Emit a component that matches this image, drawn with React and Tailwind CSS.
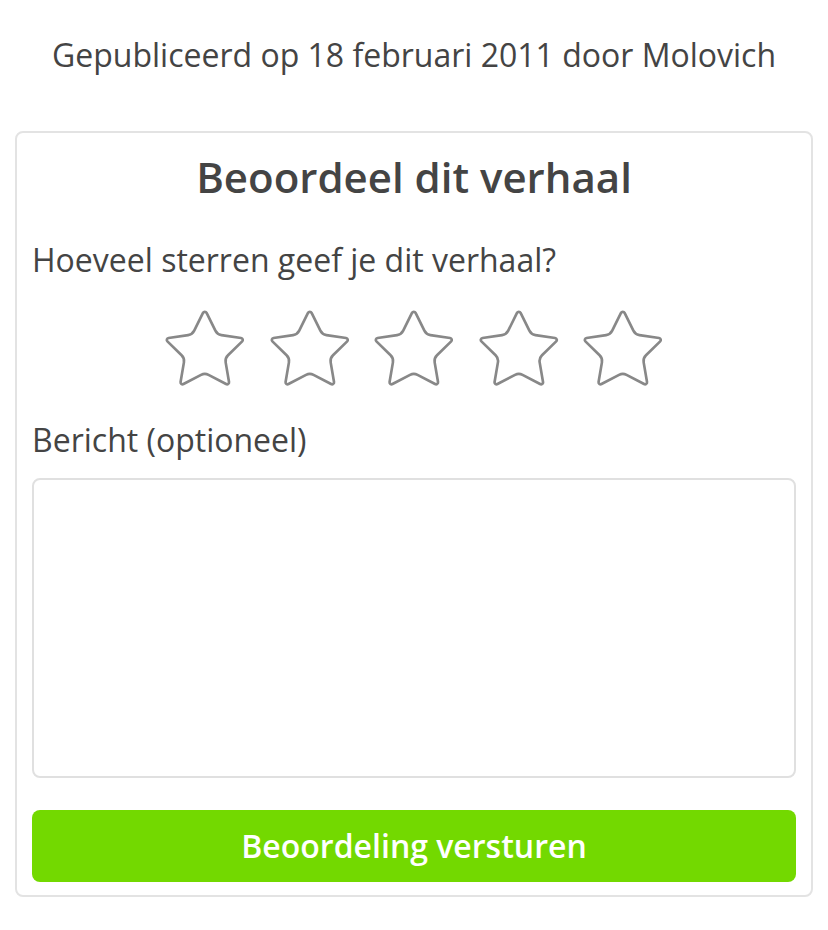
import React, { useState } from 'react';

const Star = () => (
    <svg
        width="83.6"
        height="79.8"
        viewBox="1 1 22 21"
        fill="none"
        stroke="#888888"
        strokeWidth="0.7"
        strokeLinejoin="round"
        strokeLinecap="round"
    >
        <path d="M11.525 2.295a.53.53 0 0 1 .95 0l2.31 4.679a2.123 2.123 0 0 0 1.595 1.16l5.166.756a.53.53 0 0 1 .294.904l-3.736 3.638a2.123 2.123 0 0 0-.611 1.878l.882 5.14a.53.53 0 0 1-.771.56l-4.618-2.428a2.122 2.122 0 0 0-1.973 0L6.396 21.01a.53.53 0 0 1-.77-.56l.881-5.139a2.122 2.122 0 0 0-.611-1.879L2.16 9.795a.53.53 0 0 1 .294-.906l5.165-.755a2.122 2.122 0 0 0 1.597-1.16z" />
    </svg>
);

export default function App() {
    const [message, setMessage] = useState('');

    return (
        <div className="min-h-[930px] bg-white text-[#444] font-['Open_Sans',sans-serif]">
            <div className="pt-[35px] text-center text-[32px] leading-[40px]">
                Gepubliceerd op 18 februari 2011 door Molovich
            </div>

            <div className="mx-[15px] mt-[56px] border-2 border-[#e3e3e3] rounded-[8px] px-[15px] pt-[19px] pb-[13px]">
                <h2 className="text-center text-[42px] leading-[50px] font-semibold">Beoordeel dit verhaal</h2>

                <p className="mt-[38px] text-[32px] leading-[40px]">Hoeveel sterren geef je dit verhaal?</p>

                {/* Rating */}
                <div className="mt-[28px] flex justify-center gap-[21px]">
                    {[1, 2, 3, 4, 5].map((n) => (
                        <button key={n} type="button" className="block">
                            <Star />
                        </button>
                    ))}
                </div>

                <label className="block mt-[32px] text-[32px] leading-[40px]">Bericht (optioneel)</label>
                <textarea
                    value={message}
                    onChange={(e) => setMessage(e.target.value)}
                    className="block w-full mt-[18px] h-[300px] border-2 border-[#e0e0e0] rounded-[8px] resize-none outline-none p-3 text-[24px]"
                ></textarea>

                <button
                    type="button"
                    className="block w-full mt-[32px] h-[72px] rounded-[8px] bg-[#73d900] text-white text-[32px] font-semibold"
                >
                    Beoordeling versturen
                </button>
            </div>
        </div>
    );
}
